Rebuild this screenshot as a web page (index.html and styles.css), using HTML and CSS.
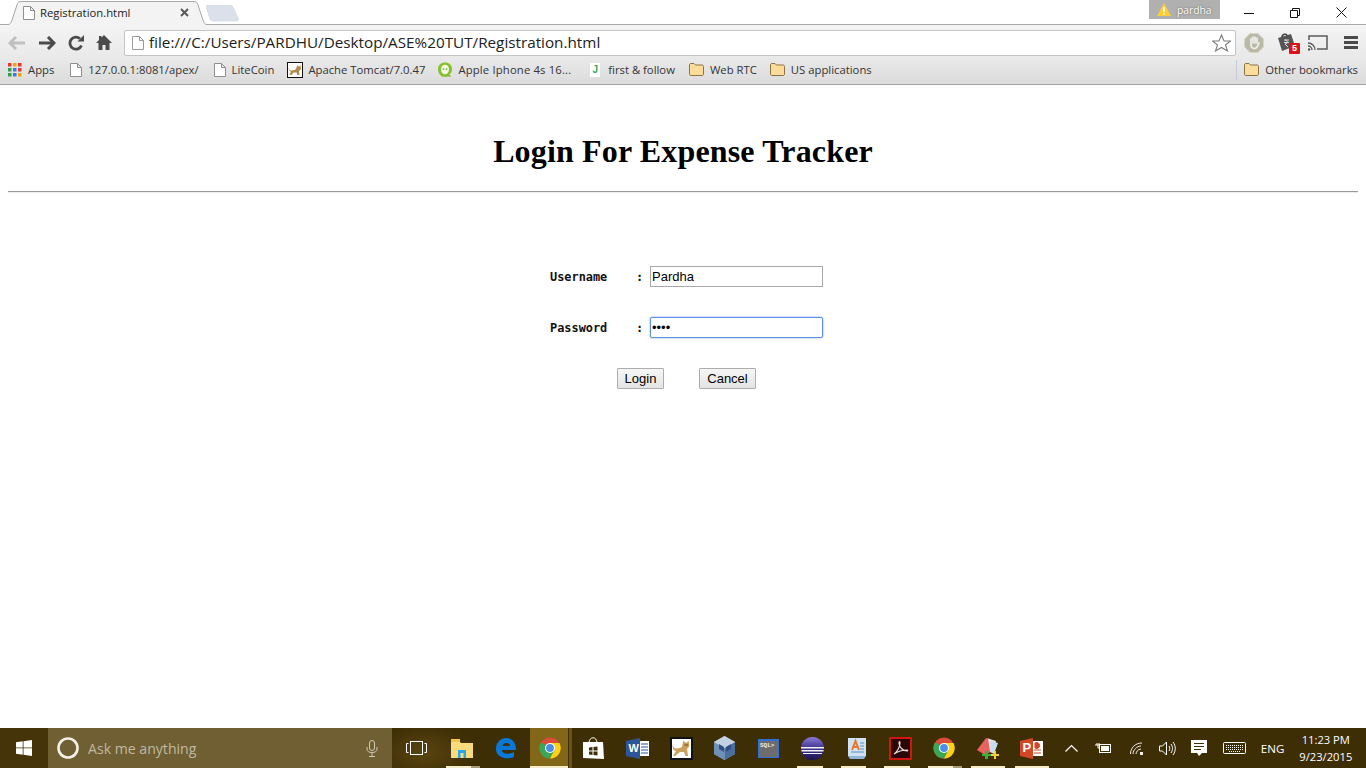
FILE: index.html
```html
<!DOCTYPE html>
<html lang="en">
<head>
<meta charset="utf-8">
<title>Registration.html</title>
<link rel="stylesheet" href="styles.css">
</head>
<body>
<div class="screen">
  <header class="chrome">
    <div class="tabstrip">
      <div class="tab">
        <svg class="tab-shape" width="202" height="25" viewBox="0 0 202 25"><path d="M0 25V24.500H2C4 24.500 5 23 6 20L11 5C12 2 13 1.500 16 1.500H187C190 1.500 191 2 192 5L197 20C198 23 199 24.500 201 24.500V25Z" fill="#f3f3f3"/><path d="M0 24.500H2C4 24.500 5 23 6 20L11 5C12 2 13 1.500 16 1.500H187C190 1.500 191 2 192 5L197 20C198 23 199 24.500 201 24.500" fill="none" stroke="#a8a8a8"/></svg>
        <svg class="page-icon tab-icon" width="12" height="14" viewBox="0 0 12 14"><path d="M.5.500H7.500L11.500 4.500V13.500H.5ZM7.500.500V4.500H11.500" fill="#fff" stroke="#8f8f8f"/></svg>
        <span class="tab-title">Registration.html</span>
        <svg class="tab-close" width="9" height="9" viewBox="0 0 9 9"><path d="M1 1L8 8M8 1L1 8" stroke="#5a5a5a" stroke-width="2"/></svg>
      </div>
      <svg class="new-tab" width="33" height="17" viewBox="0 0 33 17"><path d="M0 1.500C0 .5 1 0 2 0H24C25.500 0 26 .5 27 2L32 13C33 15 32 16 30 16H7C5 16 4.500 15 4 14Z" fill="#dbe1ea" stroke="#cfd4dc" stroke-width=".6"/></svg>
      <div class="strip-spacer"></div>
      <div class="profile">
        <svg width="14" height="13" viewBox="0 0 14 13"><path d="M7 0L14 13H0Z" fill="#fbcf35"/><rect x="6.300" y="4" width="1.400" height="5" fill="#fff"/><rect x="6.300" y="10" width="1.400" height="1.500" fill="#fff"/></svg>
        <span>pardha</span>
      </div>
      <div class="win-controls">
        <div class="win-btn"><svg width="10" height="10" viewBox="0 0 10 10"><path d="M0 5.500H10" stroke="#111"/></svg></div>
        <div class="win-btn"><svg width="10" height="10" viewBox="0 0 10 10"><path d="M.5 2.500H7.500V9.500H.5ZM2.500 2.500V.5H9.500V7.500H7.500" fill="none" stroke="#111"/></svg></div>
        <div class="win-btn"><svg width="11" height="11" viewBox="0 0 11 11"><path d="M.5.500L10.500 10.500M10.500.5L.5 10.500" stroke="#111"/></svg></div>
      </div>
    </div>
    <div class="toolbar">
      <div class="nav">
        <svg width="18" height="14" viewBox="0 0 18 14"><path d="M8 1L2 7L8 13M2 7H17" fill="none" stroke="#c0c0c0" stroke-width="3"/></svg>
        <svg width="18" height="14" viewBox="0 0 18 14"><path d="M10 1L16 7L10 13M16 7H1" fill="none" stroke="#4b4b4b" stroke-width="3"/></svg>
        <svg width="16" height="16" viewBox="0 0 16 16"><path d="M13.500 10.500A6 6 0 1 1 12 3.700" fill="none" stroke="#4b4b4b" stroke-width="2.800"/><path d="M9.500 6.500H16V0Z" fill="#4b4b4b"/></svg>
        <svg width="16" height="15" viewBox="0 0 16 15"><path d="M8 0L16 8H13.500V15H9.500V10H6.500V15H2.500V8H0L3 5V1H5.500V2.500Z" fill="#4b4b4b"/></svg>
      </div>
      <div class="omnibox">
        <svg class="page-icon" width="12" height="14" viewBox="0 0 12 14"><path d="M.5.500H7.500L11.500 4.500V13.500H.5ZM7.500.500V4.500H11.500" fill="#fff" stroke="#9a9a9a"/></svg>
        <span class="url">file:///C:/Users/PARDHU/Desktop/ASE%20TUT/Registration.html</span>
        <svg class="star" width="19" height="18" viewBox="0 0 19 18"><path d="M9.500 1L12 7H18.500L13.500 11L15.500 17L9.500 13.500L3.500 17L5.500 11L.5 7H7Z" fill="#fff" stroke="#7c7c7c" stroke-width="1.100"/></svg>
      </div>
      <div class="extensions">
        <svg width="20" height="20" viewBox="0 0 20 20"><path d="M6 .5H14L19.500 6V14L14 19.500H6L.5 14V6Z" fill="#b9b9a6" stroke="#d6d6c8"/><path d="M7 10V5.500M9 10V4M11 10V4M13 10V5M7 10V12C7 14 8.500 15.500 10 15.500C12 15.500 13 14.500 13.500 13L15 10" fill="none" stroke="#eee" stroke-width="1.700" stroke-linecap="round"/></svg>
        <div class="ext-wallet">
          <svg width="19" height="19" viewBox="0 0 19 19"><path d="M1 5L14 1L18 13L5 18Z" fill="#555"/><path d="M5 4C5 1 10 0 10 3" fill="none" stroke="#444" stroke-width="1.500"/><path d="M7 7H12M7 9.500H12M8 7C11 7 11 11 8 11L11 14" fill="none" stroke="#ddd" stroke-width="1"/></svg>
          <span class="ext-badge">5</span>
        </div>
        <svg width="20" height="16" viewBox="0 0 20 16"><path d="M1 5V1H19V14H9" fill="none" stroke="#5a5a5a" stroke-width="1.500"/><path d="M0 8A7 7 0 0 1 7 15M0 11A4 4 0 0 1 4 15" fill="none" stroke="#5a5a5a" stroke-width="1.300"/><circle cx="1" cy="14.500" r="1.300" fill="#5a5a5a"/></svg>
        <svg class="menu-icon" width="14" height="13" viewBox="0 0 14 13"><path d="M0 0H14V3H0ZM0 5H14V8H0ZM0 10H14V13H0Z" fill="#4b4b4b"/></svg>
      </div>
    </div>
    <nav class="bookmarks">
      <a class="bm bm-apps">
        <svg width="14" height="14" viewBox="0 0 14 14"><path d="M0 0h3.500v3.500H0z" fill="#e53935"/><path d="M5 0h3.500v3.500H5z" fill="#f4a300"/><path d="M10 0h3.500v3.500H10z" fill="#e53935"/><path d="M0 5h3.500v3.500H0z" fill="#2e9e4f"/><path d="M5 5h3.500v3.500H5z" fill="#3b78e7"/><path d="M10 5h3.500v3.500H10z" fill="#e53935"/><path d="M0 10h3.500v3.500H0z" fill="#2e9e4f"/><path d="M5 10h3.500v3.500H5z" fill="#3b78e7"/><path d="M10 10h3.500v3.500H10z" fill="#f4a300"/></svg>
        <span>Apps</span>
      </a>
      <a class="bm bm-local">
        <svg class="page-icon" width="12" height="14" viewBox="0 0 12 14"><path d="M.5.500H7.500L11.500 4.500V13.500H.5ZM7.500.500V4.500H11.500" fill="#fff" stroke="#8f8f8f"/></svg>
        <span>127.0.0.1:8081/apex/</span>
      </a>
      <a class="bm bm-lite">
        <svg class="page-icon" width="12" height="14" viewBox="0 0 12 14"><path d="M.5.500H7.500L11.500 4.500V13.500H.5ZM7.500.500V4.500H11.500" fill="#fff" stroke="#8f8f8f"/></svg>
        <span>LiteCoin</span>
      </a>
      <a class="bm bm-tomcat">
        <svg width="16" height="16" viewBox="0 0 16 16"><rect x=".5" y=".5" width="15" height="15" fill="#fff" stroke="#111"/><path d="M2 5C2 8 3 9 5 8.500C7 8 8 8 9 7L10 4L10.500 3L11.500 4.500H12.500L13.500 3L14 7L12 9L12.500 13H10.500L9.500 10.500L6.500 10.500L4.500 13H2.500L4 9.500C2 9.500 1.500 7 2 5Z" fill="#b08a4a"/></svg>
        <span>Apache Tomcat/7.0.47</span>
      </a>
      <a class="bm bm-apple">
        <svg width="14" height="16" viewBox="0 0 14 16"><path d="M7 .5C11 .5 14 3 14 7C14 9.500 13 11.500 11.500 12.500L13 15L10 14.500C9 14.500 8 15 7 15C3 15 0 11.500 0 7C0 3 3 .5 7 .5Z" fill="#86c22e"/><ellipse cx="7" cy="7.500" rx="4" ry="4.800" fill="#f4f8e8"/><circle cx="5.500" cy="7" r=".9" fill="#86c22e"/><circle cx="8.500" cy="7" r=".9" fill="#86c22e"/></svg>
        <span class="ls-apple">Apple Iphone 4s 16...</span>
      </a>
      <a class="bm bm-first">
        <span class="j-icon">J</span>
        <span>first &amp; follow</span>
      </a>
      <a class="bm bm-webrtc">
        <svg class="folder" width="15" height="13" viewBox="0 0 15 13"><path d="M.5 2C.5 1 1 .5 2 .5H5L6.500 2H13C14 2 14.500 2.500 14.500 3.500V11C14.500 12 14 12.500 13 12.500H2C1 12.500 .5 12 .5 11Z" fill="#fbdc9a" stroke="#8a7444"/></svg>
        <span>Web RTC</span>
      </a>
      <a class="bm bm-us">
        <svg class="folder" width="15" height="13" viewBox="0 0 15 13"><path d="M.5 2C.5 1 1 .5 2 .5H5L6.500 2H13C14 2 14.500 2.500 14.500 3.500V11C14.500 12 14 12.500 13 12.500H2C1 12.500 .5 12 .5 11Z" fill="#fbdc9a" stroke="#8a7444"/></svg>
        <span>US applications</span>
      </a>
      <div class="bm-spacer"></div>
      <a class="bm bm-other">
        <svg class="folder" width="15" height="13" viewBox="0 0 15 13"><path d="M.5 2C.5 1 1 .5 2 .5H5L6.500 2H13C14 2 14.500 2.500 14.500 3.500V11C14.500 12 14 12.500 13 12.500H2C1 12.500 .5 12 .5 11Z" fill="#fbdc9a" stroke="#8a7444"/></svg>
        <span>Other bookmarks</span>
      </a>
    </nav>
  </header>

  <main class="page">
    <h1 class="title">Login For Expense Tracker</h1>
    <hr class="rule">
    <form class="login">
      <label class="field-label" for="user">Username</label>
      <span class="colon">:</span>
      <input class="field" id="user" type="text" value="Pardha">
      <label class="field-label" for="pass">Password</label>
      <span class="colon">:</span>
      <input class="field field-focus" id="pass" type="password" value="abcd">
      <div class="actions">
        <button class="btn btn-login" type="button">Login</button>
        <button class="btn btn-cancel" type="button">Cancel</button>
      </div>
    </form>
  </main>

  <footer class="taskbar">
    <div class="start">
      <svg width="16" height="16" viewBox="0 0 16 16"><path d="M0 2.300L6.700 1.300V7.500H0ZM7.500 1.200L16 0V7.500H7.500ZM0 8.300H6.700V14.700L0 13.700ZM7.500 8.300H16V16L7.500 14.800Z" fill="#fff"/></svg>
    </div>
    <div class="search">
      <svg width="22" height="22" viewBox="0 0 22 22"><circle cx="11" cy="11" r="9.500" fill="none" stroke="#f4f0e6" stroke-width="2.600"/></svg>
      <span class="search-text">Ask me anything</span>
      <svg class="mic" width="12" height="17" viewBox="0 0 12 17"><rect x="3.500" y=".5" width="5" height="10" rx="2.500" fill="none" stroke="#cfc8b4"/><path d="M1 7V9C1 11.500 3 12.500 6 12.500C9 12.500 11 11.500 11 9V7M6 12.500V16M3 16.500H9" fill="none" stroke="#cfc8b4"/></svg>
    </div>
    <div class="task-view">
      <svg width="21" height="14" viewBox="0 0 21 14"><rect x="4.500" y=".5" width="12" height="13" fill="none" stroke="#fff"/><path d="M2.500 2.500H.5V11.500H2.500M18.500 2.500H20.500V11.500H18.500" fill="none" stroke="#fff"/></svg>
    </div>
    <div class="apps">
      <div class="app app-run app-run-stack">
        <svg width="22" height="19" viewBox="0 0 22 19"><path d="M0 2H8L10 4H22V19H0Z" fill="#fbdc7c"/><path d="M0 0H9V3H0Z" fill="#f4c550"/><path d="M7 11H15V19H12.500V14H9.500V19H7Z" fill="#2aa7e8"/></svg>
      </div>
      <div class="app">
        <svg width="21" height="21" viewBox="0 0 21 21"><path d="M1 11C1 4 6 0 11 0C17 0 21 4 21 12H7C7 16 13 17 19 14V19C12 22 1 20 1 11ZM7.500 8H15C15 4 8 4 7.500 8Z" fill="#0a78d7"/></svg>
      </div>
      <div class="app app-active app-run">
        <svg width="22" height="22" viewBox="0 0 22 22"><circle cx="11" cy="11" r="10.500" fill="#dd4b39"/><path d="M2 5.500A10.500 10.500 0 0 0 11 21.500L16 12Z" fill="#3aa757"/><path d="M11 6H20.500A10.500 10.500 0 0 1 11 21.500L15.500 13Z" fill="#fcd116"/><circle cx="11" cy="11" r="5" fill="#fff"/><circle cx="11" cy="11" r="3.900" fill="#4a8fe7"/></svg>
      </div>
      <div class="app">
        <svg width="21" height="23" viewBox="0 0 21 23"><path d="M6 6C6 -1 14 -1 14 6" fill="none" stroke="#fff"/><path d="M0 5H20L21 22L0 21Z" fill="#fff"/><path d="M6 10.500L9.500 10V13.500H6ZM10.500 10L14.500 9.500V13.500H10.500ZM6 14.500H9.500V18L6 17.500ZM10.500 14.500H14.500V18.500L10.500 18Z" fill="#3d2e06"/></svg>
      </div>
      <div class="app">
        <svg width="23" height="21" viewBox="0 0 23 21"><path d="M0 3L14 0V21L0 18Z" fill="#2b579a"/><path d="M14 3H23V18H14Z" fill="#fff"/><path d="M15 6H22M15 9H22M15 12H22M15 15H22" stroke="#2b579a"/><text class="word-w" x="2.500" y="14">W</text></svg>
      </div>
      <div class="app">
        <svg width="23" height="23" viewBox="0 0 23 23"><rect x="1" y="1" width="21" height="21" fill="#fff" stroke="#111" stroke-width="2"/><path d="M3 7C3 10 4 12 7 11.500C9 11 11 11 12 10L13 5L13.500 3.500L15 5.500H17L18.500 3.500L19.500 9L17 12L18 19H15.500L14 15H10L5 19H3L6 14C3 14 2 10 3 7Z" fill="#c9a05c"/><path d="M14.500 8H18" stroke="#6b4a20"/></svg>
      </div>
      <div class="app">
        <svg width="21" height="24" viewBox="0 0 21 24"><path d="M10.500 0L21 6V18L10.500 24L0 18V6Z" fill="#8ea7c8"/><path d="M10.500 12L21 6V18L10.500 24Z" fill="#4a6f9f"/><path d="M10.500 12L0 6V18L10.500 24Z" fill="#6f90b8"/><path d="M10.500 0L21 6L10.500 12L0 6Z" fill="#c3d1e3"/><path d="M5 8L10 11V16L5 13ZM12 11L17 8V13L12 16Z" fill="#2f5080"/></svg>
      </div>
      <div class="app">
        <svg width="21" height="19" viewBox="0 0 21 19"><rect width="21" height="19" fill="#2f6fd6"/><rect x="1" y="2" width="19" height="16" fill="#6d6d6d"/><text class="sql-text" x="2" y="8">SQL&gt;</text></svg>
      </div>
      <div class="app app-run">
        <svg width="23" height="23" viewBox="0 0 23 23"><defs><linearGradient id="ecl" x1="0" y1="0" x2="0" y2="1"><stop offset="0" stop-color="#8a7bd6"/><stop offset=".5" stop-color="#3d3190"/><stop offset="1" stop-color="#1c1650"/></linearGradient></defs><circle cx="11.500" cy="11.500" r="11.500" fill="url(#ecl)"/><path d="M0 10H23V11.500H0ZM.5 13H22.500V14.500H.5ZM2 16H21V17H2Z" fill="#f2f2f2"/></svg>
      </div>
      <div class="app app-run">
        <svg width="18" height="21" viewBox="0 0 18 21"><path d="M0 0H18V18H0Z" fill="#cfe3f4"/><path d="M0 18H18L16 21H2Z" fill="#8fb6d6"/><path d="M4 12L7.500 3L11 12M5.500 9H9.500" fill="none" stroke="#e8762c" stroke-width="2"/><path d="M12 5H16M12 8H16M12 11H16M3 14H16" stroke="#5b8fc0"/></svg>
      </div>
      <div class="app app-run">
        <svg width="23" height="23" viewBox="0 0 23 23"><rect x="1" y="1" width="21" height="21" fill="#2a0808" stroke="#d0170f" stroke-width="2"/><path d="M5 17C8 15 11 10 11 6C11 4 10 4 10 6C10 10 14 14 18 14C19 14 19 13 18 13C13 13 8 15 5 17Z" fill="none" stroke="#e8e0e0" stroke-width="1.200"/></svg>
      </div>
      <div class="app app-run app-run-stack">
        <svg width="22" height="22" viewBox="0 0 22 22"><circle cx="11" cy="11" r="10.500" fill="#dd4b39"/><path d="M2 5.500A10.500 10.500 0 0 0 11 21.500L16 12Z" fill="#3aa757"/><path d="M11 6H20.500A10.500 10.500 0 0 1 11 21.500L15.500 13Z" fill="#fcd116"/><circle cx="11" cy="11" r="5" fill="#fff"/><circle cx="11" cy="11" r="3.900" fill="#4a8fe7"/></svg>
      </div>
      <div class="app app-run app-run-wide">
        <svg width="24" height="23" viewBox="0 0 24 23"><path d="M1 13L10 1L14 2L16 14L9 18Z" fill="#e8635f"/><path d="M12 1.500L20 4L17 15L14 14Z" fill="#e8e8e8"/><path d="M15 4L22 6L18 17L14 15Z" fill="#c7dcf2"/><path d="M9 14H12V17H15V19H12V22H9V19H6V17H9Z" fill="#3fae3a"/><path d="M18 14H20V17H23V19H20V22H18V19H15V17H18Z" fill="#f6cf3d"/></svg>
      </div>
      <div class="app app-run app-run-wide">
        <svg width="23" height="21" viewBox="0 0 23 21"><path d="M0 3L13 0V21L0 18Z" fill="#d24726"/><path d="M13 3H23V18H13Z" fill="#fff"/><path d="M15 5A3 3 0 1 1 15 10ZM14 12H21M14 15H21" fill="#d24726" stroke="#d24726"/><text class="ppt-p" x="2.500" y="14">P</text></svg>
      </div>
    </div>
    <div class="tray">
      <svg class="tray-chevron" width="13" height="8" viewBox="0 0 13 8"><path d="M.5 7.500L6.500 1.500L12.500 7.500" fill="none" stroke="#fff" stroke-width="1.200"/></svg>
      <svg class="tray-battery" width="16" height="10" viewBox="0 0 16 10"><path d="M0 2H5M2 0V2M4 0V2M3 2V5H5" fill="none" stroke="#fff"/><rect x="4.500" y="1.500" width="11" height="8" fill="none" stroke="#fff"/><rect x="6" y="3" width="8" height="5" fill="#fff"/></svg>
      <svg class="tray-wifi" width="14" height="13" viewBox="0 0 14 13"><path d="M.5 12C.5 6 5 1 12 1M3 12C3 8 7 4 11 4M6 12C6 10 8 7 11 7" fill="none" stroke="#f4f0e6"/><rect x="10" y="10" width="3" height="3" fill="#f4f0e6"/></svg>
      <svg class="tray-sound" width="17" height="15" viewBox="0 0 17 15"><path d="M.5 5H3.500L7.500 1V14L3.500 10H.5Z" fill="none" stroke="#fff"/><path d="M10 5C11 6.500 11 8.500 10 10M12 3C14 6 14 9 12 12M14 1C17 5 17 10 14 14" fill="none" stroke="#fff"/></svg>
      <svg class="tray-note" width="16" height="16" viewBox="0 0 16 16"><path d="M0 0H16V13H11L8 16L6 13H0Z" fill="#fff"/><path d="M3 3.500H13M3 6.500H13M3 9.500H10" stroke="#3d2e06"/></svg>
      <svg class="tray-kbd" width="23" height="12" viewBox="0 0 23 12"><rect x=".5" y=".5" width="22" height="11" rx="1" fill="none" stroke="#fff"/><path d="M3 3.500H20M3 5.500H20M3 7.500H20M6 9.500H17" stroke="#fff" stroke-dasharray="1 1"/></svg>
      <span class="tray-lang">ENG</span>
      <div class="clock"><span>11:23 PM</span><span>9/23/2015</span></div>
    </div>
  </footer>
</div>
</body>
</html>
```

FILE: styles.css
```css
* { box-sizing: border-box; }
html, body { margin: 0; height: 100%; }
body { overflow: hidden; background: #fff; }
svg { display: block; flex: none; }

.screen { width: 1366px; height: 768px; display: flex; flex-direction: column; }

.chrome { flex: none; font-family: "Open Sans", "Noto Sans", sans-serif; color: #222; }

.tabstrip { height: 25px; display: flex; align-items: flex-start; background: #fff; border-bottom: 1px solid #a8a8a8; }
.tab { position: relative; width: 200px; height: 25px; margin-left: 6px; display: flex; align-items: center; padding: 0 0 0 17px; }
.tab-shape { position: absolute; left: 0; top: 0; }
.tab-icon, .tab-title, .tab-close { position: relative; }
.tab-title { margin-left: 5px; font-size: 11.300px; width: 134px; color: #222; }
.tab-close { margin-left: 6px; }
.new-tab { margin: 5px 0 0 0; }
.strip-spacer { flex: 1; }
.profile { width: 71px; height: 19px; margin-right: 6px; background: #b0b0b0; display: flex; align-items: center; padding-left: 8px; gap: 6px; font-size: 10.300px; color: #fff; text-shadow: 0 0 2px #555; }
.win-controls { display: flex; margin-right: 2px; }
.win-btn { width: 46px; height: 25px; display: flex; align-items: center; justify-content: center; }

.toolbar { height: 33px; padding-top: 2px; display: flex; align-items: center; background: linear-gradient(#f4f4f4, #e9e9e9); }
.nav { width: 124px; flex: none; display: flex; align-items: center; padding-left: 8px; gap: 12px; }
.omnibox { width: 1112px; flex: none; height: 26px; display: flex; align-items: center; padding: 0 4px 0 7px; background: #fff; border: 1px solid #c4c4c4; border-radius: 2px; }
.url { flex: 1; margin-left: 5px; padding-bottom: 2px; font-size: 15.250px; color: #222; white-space: nowrap; }
.extensions { flex: 1; display: flex; align-items: center; padding-left: 8px; gap: 12px; }
.ext-wallet { position: relative; width: 19px; height: 19px; margin-left: 1px; }
.ext-badge { position: absolute; left: 12px; top: 10px; width: 11px; height: 11px; background: #d9131a; color: #fff; font: bold 9px/11px "Liberation Sans", sans-serif; text-align: center; border-radius: 1px; }
.menu-icon { margin-left: 4px; }

.bookmarks { height: 27px; display: flex; align-items: center; background: linear-gradient(#e9e9e9, #dcdcdc); border-bottom: 1px solid #a3a3a3; padding: 0 0 3px 8px; font-size: 11.300px; }
.bm { display: flex; align-items: center; gap: 6px; white-space: nowrap; color: #333; }
.bm-local { margin-left: 16px; }
.bm-lite { margin-left: 15px; }
.bm-tomcat { margin-left: 13px; gap: 5px; }
.bm-apple { margin-left: 13px; }
.ls-apple { letter-spacing: .15px; }
.bm-first { margin-left: 19px; }
.bm-webrtc { margin-left: 14px; }
.bm-us { margin-left: 13px; }
.bm-spacer { flex: 1; }
.bm-other { border-left: 1px solid #c3ccd6; padding-left: 7px; height: 20px; margin-right: 8px; }
.j-icon { width: 10px; height: 14px; background: #fff; color: #3aa757; font: bold 10px/14px "Liberation Sans", sans-serif; text-align: center; margin-right: 2px; }

.page { flex: 1; min-height: 0; padding: 0 8px; font-family: "Liberation Serif", serif; }
.title { margin: 0; padding-top: 48px; text-align: center; font-size: 32px; line-height: 37px; font-weight: bold; color: #000; letter-spacing: .15px; }
.rule { margin: 21px 0 0; border: 0; border-top: 1px solid #9a9a9a; border-bottom: 1px solid #eee; height: 2px; }
.login { width: 273px; margin: 73px 0 0 542px; display: grid; grid-template-columns: 86px 14px 173px; row-gap: 30px; align-items: center; }
.field-label, .colon { font: bold 11.900px "DejaVu Sans Mono", "Liberation Mono", monospace; color: #111; }
.field { width: 173px; height: 21px; padding: 1px 1px; border: 1px solid #a9a9a9; border-radius: 0; font: 13px "Liberation Sans", sans-serif; color: #000; background: #fff; outline: none; }
.field-focus { box-shadow: 0 0 2px #6c9ce8; border-color: #5e90e4; border-radius: 2px; }
.actions { grid-column: 1 / -1; display: flex; gap: 35px; padding-left: 67px; }
.btn { height: 21px; padding: 0; border: 1px solid #adadad; border-radius: 1px; background: linear-gradient(#f6f6f6, #e4e4e4); font: 13px "Liberation Sans", sans-serif; color: #000; }
.btn-login { width: 47px; }
.btn-cancel { width: 57px; }

.taskbar { flex: none; height: 40px; display: flex; align-items: center; color: #fff; font-family: "Open Sans", "Noto Sans", sans-serif; background: radial-gradient(ellipse 50px 30px at 425px 25px, #5a4310, transparent), #3e2e06; }
.start { width: 48px; flex: none; height: 40px; display: flex; align-items: center; justify-content: center; background: #45340a; }
.search { width: 344px; flex: none; height: 40px; display: flex; align-items: center; padding-left: 9px; background: #6f5f33; }
.search-text { margin-left: 9px; font-size: 14.100px; color: #c0b8a2; width: 278px; }
.task-view { width: 48px; flex: none; display: flex; justify-content: center; }
.apps { display: flex; flex: none; }
.app { position: relative; width: 43.850px; height: 40px; display: flex; align-items: center; justify-content: center; }
.app-active { background: linear-gradient(90deg, transparent 2px, #826718 2px, #826718 40px, #3e2e06 40px, #3e2e06 41px, #6b5413 41px, #6b5413 44px); }
.app-run::after { content: ""; position: absolute; left: 6px; right: 12px; bottom: 0; height: 2px; background: #f6ecc8; }
.app-active::after { left: 2px; right: 4px; }
.app-run-stack::after { box-shadow: 9px 0 0 #a59c7d; right: 13px; left: 6px; }
.app-run-wide::after { left: 5px; right: 5px; }
.word-w { font: bold 11px "Liberation Sans", sans-serif; fill: #fff; }
.ppt-p { font: bold 13px "Liberation Sans", sans-serif; fill: #fff; }
.sql-text { font: bold 6px "Liberation Mono", monospace; fill: #eee; }
.tray { flex: 1; display: flex; align-items: center; padding-left: 11px; font-size: 11.600px; }
.tray-battery { margin-left: 17px; }
.tray-wifi { margin-left: 19px; }
.tray-sound { margin-left: 15px; }
.tray-note { margin-left: 15px; }
.tray-kbd { margin-left: 16px; }
.tray-lang { margin-left: 15px; width: 23px; }
.clock { display: flex; flex-direction: column; align-items: center; width: 60px; margin-left: 12px; line-height: 17px; font-size: 11.200px; }
```
